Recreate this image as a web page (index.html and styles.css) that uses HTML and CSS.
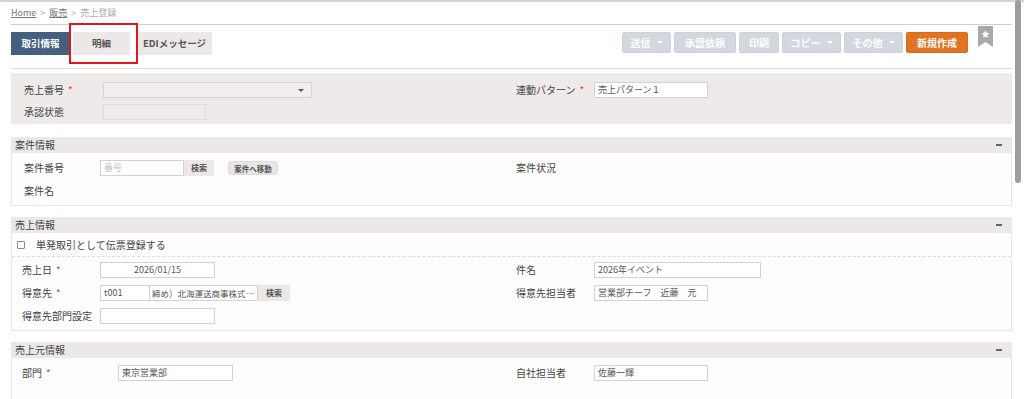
FILE: index.html
```html
<!DOCTYPE html>
<html lang="ja">
<head>
<meta charset="utf-8">
<title>売上登録</title>
<link rel="stylesheet" href="styles.css">
</head>
<body>
<div class="topline"></div>
<div class="crumb"><a>Home</a><span class="sep">&gt;</span><a>販売</a><span class="sep">&gt;</span><span class="cur">売上登録</span></div>

<div class="toolbar">
  <div class="tabs">
    <span class="tab active">取引情報</span>
    <span class="tab detail">明細<span class="hl"></span></span>
    <span class="tab edi">EDIメッセージ</span>
  </div>
  <div class="actions">
    <button class="btn w49">送信<span class="caret"></span></button>
    <button class="btn w62">承認依頼</button>
    <button class="btn w40">印刷</button>
    <button class="btn w59">コピー<span class="caret"></span></button>
    <button class="btn w59">その他<span class="caret"></span></button>
    <button class="btn w62 primary">新規作成</button>
    <svg class="bookmark" width="15" height="21" viewBox="0 0 15 21"><path d="M0 0H15V21L7.5 16L0 21Z" fill="#a9a9a9"/><path d="M7.5 4.2l1.2 2.6 2.8.3-2.1 1.9.6 2.8-2.5-1.4-2.5 1.4.6-2.8-2.1-1.9 2.8-.3z" fill="#fff"/></svg>
  </div>
</div>

<div class="headblock">
  <div class="grid g-head">
    <span class="lbl">売上番号<i class="req">*</i></span>
    <span class="cell"><span class="select"><span class="arrow"></span></span></span>
    <span class="lbl">連動パターン<i class="req">*</i></span>
    <span class="cell"><span class="inp w114">売上パターン１</span></span>
    <span class="lbl">承認状態</span>
    <span class="cell"><span class="inp w103 gray"></span></span>
  </div>
</div>

<section class="sec">
  <div class="sec-h"><span>案件情報</span><span class="minus"></span></div>
  <div class="sec-b">
    <div class="grid g-case">
      <span class="lbl">案件番号</span>
      <span class="cell"><span class="inp w84 ph">番号</span><span class="addon w30">検索</span><span class="mini">案件へ移動</span></span>
      <span class="lbl">案件状況</span>
      <span class="cell"></span>
      <span class="lbl">案件名</span>
      <span class="cell"></span>
    </div>
  </div>
</section>

<section class="sec">
  <div class="sec-h"><span>売上情報</span><span class="minus"></span></div>
  <div class="sec-b">
    <div class="check-row"><span class="box"></span><span>単発取引として伝票登録する</span></div>
    <div class="grid g-sales">
      <span class="lbl">売上日<i class="req">*</i></span>
      <span class="cell"><span class="inp w115 center">2026/01/15</span></span>
      <span class="lbl">件名</span>
      <span class="cell"><span class="inp w167">2026年イベント</span></span>
      <span class="lbl">得意先<i class="req">*</i></span>
      <span class="cell"><span class="inp w50">t001</span><span class="inp w108 joined">締め）北海運送商事株式…</span><span class="addon w32">検索</span></span>
      <span class="lbl">得意先担当者</span>
      <span class="cell"><span class="inp w114">営業部チーフ　近藤　元</span></span>
      <span class="lbl">得意先部門設定</span>
      <span class="cell"><span class="inp w115"></span></span>
      <span class="lbl"></span>
      <span class="cell"></span>
    </div>
  </div>
</section>

<section class="sec">
  <div class="sec-h"><span>売上元情報</span><span class="minus"></span></div>
  <div class="sec-b">
    <div class="grid g-src">
      <span class="lbl">部門<i class="req">*</i></span>
      <span class="cell"><span class="inp w115">東京営業部</span></span>
      <span class="lbl">自社担当者</span>
      <span class="cell"><span class="inp w114">佐藤一輝</span></span>
      <span class="lbl">&nbsp;</span>
      <span class="cell"></span>
    </div>
  </div>
</section>

<div class="scrollbar"></div>
</body>
</html>
```

FILE: styles.css
```css
html, body {
  margin: 0;
  padding: 0;
}
body {
  font-family: "Noto Sans CJK JP", "Noto Sans", sans-serif;
  font-size: 10px;
  color: #444;
  background: #fff;
  width: 1024px;
  height: 399px;
  overflow: hidden;
}
.topline {
  height: 2px;
  background: #d4d4d4;
}
.crumb {
  margin: 0 12px 0 11px;
  height: 22px;
  line-height: 22px;
  font-size: 9px;
  color: #999;
  border-bottom: 1px solid #cfcfcf;
}
.crumb a {
  color: #777;
  text-decoration: underline;
}
.crumb .sep {
  margin: 0 4px;
  color: #aaa;
}
.crumb .cur {
  color: #aaa;
}

/* toolbar */
.toolbar {
  margin: 0 12px 0 11px;
  height: 43px;
  display: flex;
  justify-content: space-between;
  border-bottom: 1px solid #dedede;
}
.tabs {
  display: flex;
  align-items: flex-start;
  padding-top: 7px;
}
.tab {
  height: 23px;
  line-height: 23px;
  font-size: 9.5px;
  font-weight: bold;
  text-align: center;
  background: #ebe8e7;
  color: #555;
}
.tab.active {
  width: 59px;
  background: #44607e;
  color: #fff;
}
.tab.detail {
  position: relative;
  width: 57px;
  margin-left: 3px;
}
.tab.detail .hl {
  position: absolute;
  left: -4px;
  top: -9px;
  width: 65px;
  height: 37px;
  border: 2px solid #e8141b;
}
.tab.edi {
  width: 75px;
  margin-left: 7px;
}
.actions {
  display: flex;
  align-items: flex-start;
  gap: 3px;
  padding-top: 7px;
  margin-right: 19px;
}
.btn {
  height: 21px;
  padding: 0;
  border: 1px solid #ccd2d9;
  border-radius: 2px;
  background: #d3d8de;
  color: #fff;
  font-family: inherit;
  font-size: 10px;
  font-weight: bold;
  display: flex;
  align-items: center;
  justify-content: center;
  gap: 6px;
}
.btn.primary {
  background: #e07324;
  border-color: #d86a1c;
}
.w49 { width: 49px; }
.w62 { width: 62px; }
.w40 { width: 40px; }
.w59 { width: 59px; }
.caret {
  width: 0;
  height: 0;
  border-left: 3px solid transparent;
  border-right: 3px solid transparent;
  border-top: 3px solid #fff;
}
.bookmark {
  margin: -6px 0 0 7px;
}

/* grids */
.grid {
  display: grid;
  grid-auto-rows: 16px;
  align-items: center;
}
.lbl {
  line-height: 16px;
  font-size: 10px;
  color: #444;
  white-space: nowrap;
}
.req {
  font-style: normal;
  color: #e53a3a;
  margin-left: 4px;
}
.cell {
  display: flex;
  align-items: center;
  height: 16px;
}
.inp {
  box-sizing: border-box;
  height: 16px;
  line-height: 14px;
  border: 1px solid #d2d2d2;
  background: #fff;
  padding: 0 3px;
  font-size: 9px;
  color: #555;
  white-space: nowrap;
  overflow: hidden;
}
.inp.gray {
  background: #efeceb;
  border-color: #dcdcdc;
}
.inp.center {
  text-align: center;
}
.inp.ph {
  color: #c4c4c4;
}
.inp.joined {
  border-left: none;
  padding: 0 2px;
  font-size: 8.5px;
}
.w84 { width: 84px; }
.w103 { width: 103px; }
.w108 { width: 108px; }
.w114 { width: 114px; }
.w115 { width: 115px; }
.w167 { width: 167px; }
.w50 { width: 50px; }
.w30 { width: 30px; }
.w32 { width: 32px; }
.addon {
  box-sizing: border-box;
  height: 16px;
  line-height: 16px;
  background: #ebe8e7;
  font-size: 8px;
  font-weight: bold;
  color: #555;
  text-align: center;
}
.mini {
  margin-left: 14px;
  width: 50px;
  height: 14px;
  line-height: 14px;
  background: #e9e6e5;
  border: 1px solid #dedbda;
  box-sizing: border-box;
  border-radius: 3px;
  font-size: 7.5px;
  font-weight: bold;
  color: #555;
  text-align: center;
}
.select {
  box-sizing: border-box;
  width: 209px;
  height: 16px;
  border: 1px solid #d6d6d6;
  background: #f1eeed;
  display: flex;
  justify-content: flex-end;
  align-items: center;
  padding-right: 7px;
}
.arrow {
  width: 0;
  height: 0;
  border-left: 3.5px solid transparent;
  border-right: 3.5px solid transparent;
  border-top: 3.5px solid #555;
}

/* header block */
.headblock {
  margin: 4px 12px 0 11px;
  height: 51px;
  box-sizing: border-box;
  padding: 9px 0 0 13px;
  background: #eeeae9;
}
.g-head {
  grid-template-columns: 79px 413px 78px 1fr;
  row-gap: 6px;
}

/* sections */
.sec {
  margin: 11px 12px 0 11px;
}
.headblock + .sec {
  margin-top: 13px;
}
.sec-h {
  height: 16px;
  line-height: 16px;
  padding: 0 10px 0 4px;
  background: #ece8e7;
  color: #444;
  display: flex;
  justify-content: space-between;
  align-items: center;
}
.minus {
  width: 6px;
  height: 1.5px;
  background: #666;
}
.sec-b {
  border: 1px solid #e6e6e6;
  border-top: none;
  background: #fdfdfd;
}
.g-case {
  padding: 7px 0 6px 12px;
  grid-template-columns: 76px 416px 78px 1fr;
  row-gap: 7px;
}
.check-row {
  height: 23px;
  display: flex;
  align-items: center;
  padding-left: 5px;
  border-bottom: 1px dashed #dcdcdc;
}
.check-row .box {
  box-sizing: border-box;
  width: 8px;
  height: 8px;
  border: 1px solid #8a8a8a;
  border-radius: 1px;
  background: #fff;
  margin-right: 11px;
}
.g-sales {
  padding: 5px 0 6px 10px;
  grid-template-columns: 78px 416px 78px 1fr;
  row-gap: 7px;
}
.g-src {
  padding: 7px 0 0 10px;
  grid-template-columns: 96px 398px 78px 1fr;
  row-gap: 7px;
}

/* scrollbar overlay */
.scrollbar {
  position: absolute;
  top: 0;
  left: 1015px;
  width: 6px;
  height: 183px;
  border-radius: 3px;
  background: #9d9d9d;
}
```
